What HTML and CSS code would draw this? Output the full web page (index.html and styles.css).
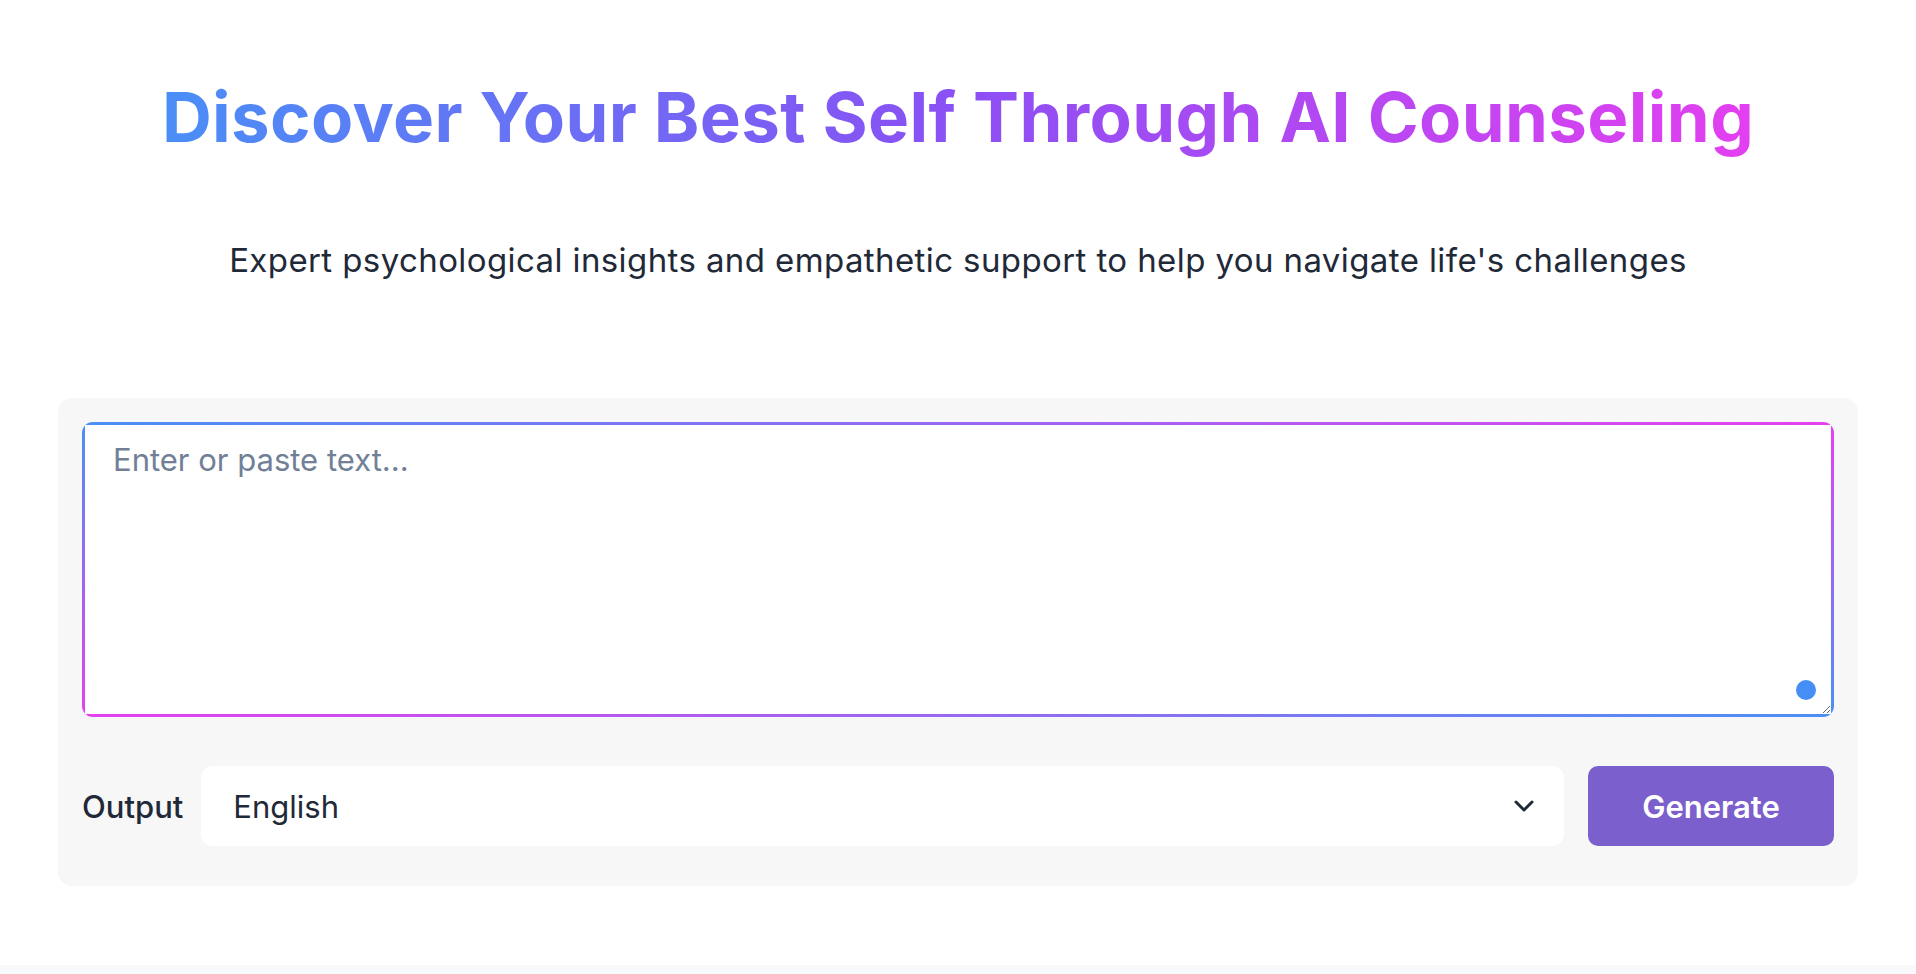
FILE: index.html
```html
<!DOCTYPE html>
<html lang="en">
<head>
<meta charset="utf-8">
<title>AI Counseling</title>
<link rel="stylesheet" href="styles.css">
</head>
<body>
<main class="page">
  <header class="hero">
    <h1 class="title">Discover Your Best Self Through AI Counseling</h1>
    <p class="subtitle">Expert psychological insights and empathetic support to help you navigate life's challenges</p>
  </header>
  <section class="panel">
    <div class="input-wrap">
      <textarea class="input" placeholder="Enter or paste text..."></textarea>
      <span class="dot"></span>
    </div>
    <div class="controls">
      <span class="label">Output</span>
      <div class="select">
        <span>English</span>
        <svg class="chevron" width="20" height="12" viewBox="0 0 20 12" aria-hidden="true">
          <path d="M2 2l8 8 8-8" fill="none" stroke="#1f2937" stroke-width="3" stroke-linecap="round" stroke-linejoin="round"/>
        </svg>
      </div>
      <button class="generate" type="button">Generate</button>
    </div>
  </section>
</main>
<footer class="footer"></footer>
</body>
</html>
```

FILE: styles.css
```css
* { box-sizing: border-box; }

html, body {
  margin: 0;
  padding: 0;
  background: #ffffff;
  font-family: Inter, "Noto Sans", "Liberation Sans", sans-serif;
  color: #1f2937;
}

.page {
  min-height: 965px;
  display: flex;
  flex-direction: column;
  align-items: center;
}

.hero {
  display: flex;
  flex-direction: column;
  align-items: center;
  padding-top: 76px;
}

.title {
  margin: 0;
  font-size: 69px;
  line-height: 1.2;
  font-weight: 700;
  letter-spacing: 0.005em;
  background: linear-gradient(to right, #4a8ef6, #8b50f4 50%, #e33ff0);
  -webkit-background-clip: text;
  background-clip: text;
  color: transparent;
  width: fit-content;
}

.subtitle {
  margin: 77px 0 0;
  font-size: 33px;
  line-height: 1.5;
  font-weight: 400;
  letter-spacing: 0.4px;
  color: #1f2937;
}

.panel {
  margin-top: 113px;
  width: 1800px;
  background: #f7f7f7;
  border-radius: 14px;
  padding: 24px 24px 40px;
}

.input-wrap {
  position: relative;
}

.input {
  display: block;
  width: 100%;
  height: 295px;
  padding: 12px 28px;
  border: 3px solid transparent;
  border-radius: 11px;
  font-family: Inter, "Noto Sans", "Liberation Sans", sans-serif;
  font-size: 31px;
  line-height: 1.5;
  color: #1f2937;
  outline: none;
  background:
    linear-gradient(#ffffff, #ffffff) padding-box,
    linear-gradient(to right, #4a90f5, #e540ef) top / 100% 3px no-repeat border-box,
    linear-gradient(to right, #e540ef, #4a90f5) bottom / 100% 3px no-repeat border-box,
    linear-gradient(to bottom, #4a90f5, #e540ef) left / 3px 100% no-repeat border-box,
    linear-gradient(to bottom, #e540ef, #4a90f5) right / 3px 100% no-repeat border-box;
}

.input::placeholder {
  color: #718096;
}

.dot {
  position: absolute;
  right: 18px;
  bottom: 17px;
  width: 20px;
  height: 20px;
  border-radius: 50%;
  background: #458ef5;
}

.controls {
  margin-top: 49px;
  display: flex;
  align-items: center;
  gap: 24px;
}

.label {
  font-size: 31px;
  font-weight: 500;
  color: #1f2937;
  margin-right: -6px;
}

.select {
  flex: 1;
  height: 80px;
  background: #ffffff;
  border-radius: 12px;
  display: flex;
  align-items: center;
  justify-content: space-between;
  padding: 0 30px 0 32px;
  font-size: 31px;
  color: #1f2937;
}

.chevron {
  display: block;
}

.generate {
  width: 246px;
  height: 80px;
  border: none;
  border-radius: 10px;
  background: #7b5fcc;
  color: #ffffff;
  font-family: Inter, "Noto Sans", "Liberation Sans", sans-serif;
  font-size: 31px;
  font-weight: 600;
  cursor: pointer;
}

.footer {
  height: 9px;
  background: #f8f9fb;
}
```
